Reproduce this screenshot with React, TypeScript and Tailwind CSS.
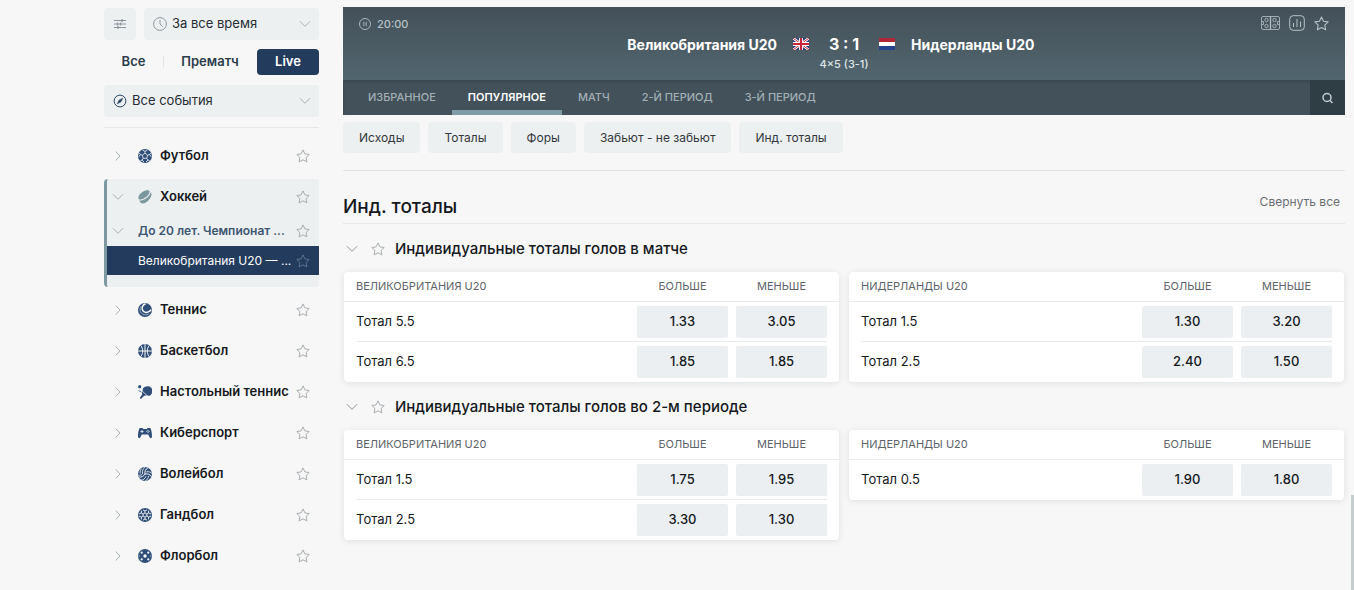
import { useState, type ReactNode } from "react";
import { clsx } from "clsx";

interface OddsRow {
  label: string;
  over: string;
  under: string;
}

interface Market {
  title: string;
  teams: { name: string; rows: OddsRow[] }[];
}

const PERIODS = ["Все", "Прематч", "Live"];
const TABS = ["ИЗБРАННОЕ", "ПОПУЛЯРНОЕ", "МАТЧ", "2-Й ПЕРИОД", "3-Й ПЕРИОД"];
const CHIPS = ["Исходы", "Тоталы", "Форы", "Забьют - не забьют", "Инд. тоталы"];

const MARKETS: Market[] = [
  {
    title: "Индивидуальные тоталы голов в матче",
    teams: [
      {
        name: "ВЕЛИКОБРИТАНИЯ U20",
        rows: [
          { label: "Тотал 5.5", over: "1.33", under: "3.05" },
          { label: "Тотал 6.5", over: "1.85", under: "1.85" },
        ],
      },
      {
        name: "НИДЕРЛАНДЫ U20",
        rows: [
          { label: "Тотал 1.5", over: "1.30", under: "3.20" },
          { label: "Тотал 2.5", over: "2.40", under: "1.50" },
        ],
      },
    ],
  },
  {
    title: "Индивидуальные тоталы голов во 2-м периоде",
    teams: [
      {
        name: "ВЕЛИКОБРИТАНИЯ U20",
        rows: [
          { label: "Тотал 1.5", over: "1.75", under: "1.95" },
          { label: "Тотал 2.5", over: "3.30", under: "1.30" },
        ],
      },
      {
        name: "НИДЕРЛАНДЫ U20",
        rows: [{ label: "Тотал 0.5", over: "1.90", under: "1.80" }],
      },
    ],
  },
];

function Star({ className = "size-[14px] text-[#a9adb0]" }: { className?: string }) {
  return (
    <svg viewBox="0 0 14 14" className={clsx("shrink-0", className)} fill="none" stroke="currentColor" strokeLinejoin="round">
      <path d="M7 .9l1.9 4 4.3.6-3.1 3 .8 4.4L7 10.8l-3.9 2.1.8-4.4-3.1-3 4.3-.6z" />
    </svg>
  );
}

function Chevron({ down, className = "size-[12px] text-[#a9b1b5]" }: { down?: boolean; className?: string }) {
  return (
    <svg viewBox="0 0 12 12" className={clsx("shrink-0", className)} fill="none" stroke="currentColor" strokeLinecap="round">
      <path d={down ? "M1.2 3.5L6 8.300l4.800-4.800" : "M4 1.800L8 6l-4 4.200"} />
    </svg>
  );
}

// Solid disc used as the base of every ball icon
function Ball({ children }: { children: ReactNode }) {
  return (
    <svg viewBox="0 0 14 14" className="size-[14px] shrink-0" fill="none" stroke="#f7f7f7">
      <circle cx="7" cy="7" r="7" fill="#2f4f79" stroke="none" />
      {children}
    </svg>
  );
}

const FootballIcon = () => (
  <Ball>
    <path d="M7 4.2l2.7 2-1 3.1H5.3l-1-3.1zM7 4.2V2.4M9.7 6.2l1.9-.7M8.7 9.3l1.2 1.7M5.3 9.3L4.1 11M4.3 6.2l-1.9-.7" strokeWidth=".8" />
    <path d="M4.6 1.2L7 2.4l2.4-1.2M12.9 3.8l-1.3 1.7 1.6 2.3M11.6 11.6L9.9 11l-1.8 2M2.4 11.6l1.7-.6 1.8 2M1.1 3.8l1.3 1.7L.8 7.8" strokeWidth=".8" />
  </Ball>
);

const HockeyIcon = () => (
  <svg viewBox="0 0 14 14" className="size-[14px] shrink-0" fill="#7c989f">
    <path d="M1 9.600C-1 6.500 3 1.800 7.500.600c2.200-.6 3.700-.1 4.200.8C11.600 5 5.500 9.800 1 9.600z" />
    <path d="M1.400 10.600c5 .2 11-4.800 11.300-8.400 2.200 2-.1 6.600-3.400 9.400-3 2.500-7.200 2.800-7.900-1z" />
  </svg>
);

const TennisIcon = () => (
  <Ball>
    <path d="M7.600.8C4.200 2 3.300 5.400 4.800 7.700c1.600 2.500 5.500 2.500 8.400-1" strokeWidth="1.500" />
    <path d="M3 3.200C1.300 6 2 9.400 4.400 11c2.300 1.400 5 1 6.800-.5" strokeWidth=".5" />
  </Ball>
);

const BasketballIcon = () => (
  <Ball>
    <path d="M7 0v14M0 7h14M2.800 1.500c2.500 3.300 2.500 7.700 0 11M11.200 1.500c-2.500 3.300-2.500 7.700 0 11" />
  </Ball>
);

const TableTennisIcon = () => (
  <svg viewBox="0 0 14 14" className="size-[14px] shrink-0" fill="#2f4f79">
    <circle cx="1.700" cy="1.700" r="1.600" />
    <path d="M5 3.300c2-2.500 6-2.800 8-.8s1.800 6-.8 7.900c-1.200.8-2.500.4-3.400-.4L4.600 6z" />
    <path d="M4.100 6.200l4.500 4.400-2.400.2-2.700 2.800c-.9.700-2-.2-1.400-1.200l2-2.900z" />
    <path d="M.5 5.500l3 1.700" stroke="#2f4f79" strokeWidth=".8" />
  </svg>
);

const GamepadIcon = () => (
  <svg viewBox="0 0 14 14" className="size-[14px] shrink-0" fill="#2f4f79">
    <path d="M2 2h2.500l.8.900h3.400l.8-.9H12c1.200.6 2 4.500 2 8.300 0 2.200-2 2.400-2.600.8L10.300 8.600H3.700L2.600 11.100C2 12.700 0 12.500 0 10.300 0 6.500.8 2.600 2 2z" />
    <path d="M4 4v3M2.500 5.500h3" stroke="#f7f7f7" strokeWidth=".8" />
    <path d="M10 3.900v1M10 6.100v1M8.400 5.500h1M10.600 5.500h1" stroke="#f7f7f7" strokeWidth=".9" />
  </svg>
);

const VolleyballIcon = () => (
  <Ball>
    <path d="M7 7C6.500 4.500 7.500 2 10 .8M7 7c2.500-.5 5 .3 6.500 2.700M7 7c-1.300 2.300-3.700 3.500-6.300 3" strokeWidth="1" />
    <path d="M4.600 6.800C3.900 4 5 1.700 7 .2M2.200 6.500C1.800 4.500 2.500 2.800 3.500 1.600M8.300 4.900c2.500-.6 4.400.2 5.600 1.600M8 9.200c-.7 2.300-2.700 4-5 3.800M10.600 9c-.2 2.200-1.500 4-3.500 5M4.600 6.800C3.800 7.800 2 8.700.3 8.200" strokeWidth=".8" />
  </Ball>
);

const HandballIcon = () => (
  <Ball>
    <path d="M7 4.900l1.900 1.100v2L7 9.100 5.100 8V6zM7 4.900V3M8.900 6l1.700-1M8.900 8l1.700 1M7 9.100V11M5.100 8L3.400 9M5.100 6L3.400 5" strokeWidth=".9" />
    <path d="M7 3L4.900 1.800M7 3l2.100-1.200M10.600 5V2.600M10.600 5l2.400.9M10.600 9l2.400-.9M10.600 9v2.400M7 11l2.100 1.200M7 11l-2.100 1.200M3.400 9v2.400M3.400 9L1 8.100M3.400 5L1 5.900M3.400 5V2.600" strokeWidth=".9" />
  </Ball>
);

const FloorballIcon = () => (
  <Ball>
    <g fill="#f7f7f7" stroke="none">
      <circle cx="7" cy="7" r="1.700" />
      <circle cx="3.700" cy="3.700" r="1.100" />
      <circle cx="10.300" cy="3.700" r="1.100" />
      <circle cx="3.700" cy="10.300" r="1.100" />
      <circle cx="10.300" cy="10.300" r="1.100" />
      <circle cx="12.800" cy="7" r=".6" />
      <circle cx="1.200" cy="7" r=".6" />
    </g>
  </Ball>
);

const SPORTS = [
  { name: "Футбол", icon: FootballIcon },
  { name: "Хоккей", icon: HockeyIcon, open: true },
  { name: "Теннис", icon: TennisIcon },
  { name: "Баскетбол", icon: BasketballIcon },
  { name: "Настольный теннис", icon: TableTennisIcon },
  { name: "Киберспорт", icon: GamepadIcon },
  { name: "Волейбол", icon: VolleyballIcon },
  { name: "Гандбол", icon: HandballIcon },
  { name: "Флорбол", icon: FloorballIcon },
];

function FilterSelect({ label, value, className, children }: { label: string; value: string; className?: string; children: ReactNode }) {
  return (
    <label className={clsx("relative flex h-8 items-center rounded-sm bg-[#edf0f1]", className)}>
      {children}
      <select
        aria-label={label}
        className="absolute inset-0 w-full cursor-pointer appearance-none bg-transparent pr-8 pl-7 text-[13px] text-[#262c33] outline-none"
      >
        <option>{value}</option>
      </select>
      <Chevron down className="mr-2 ml-auto size-[12px] text-[#a9b1b5]" />
    </label>
  );
}

function Sidebar() {
  const [period, setPeriod] = useState("Live");

  return (
    <aside className="w-[215px] shrink-0 pt-2">
      <div className="flex gap-2">
        <button aria-label="Фильтры" className="flex size-8 items-center justify-center rounded-sm bg-[#edf0f1] text-[#8d979d]">
          <svg viewBox="0 0 12 12" className="size-3" fill="none" stroke="currentColor">
            <path d="M0 2.500h12M0 6h12M0 9.500h12" />
            <path d="M8 1v3M3.500 4.500v3M6.500 4.500v3M4 8v3" strokeWidth="1.300" />
          </svg>
        </button>
        <FilterSelect label="Период" value="За все время" className="flex-1">
          <svg viewBox="0 0 14 14" className="ml-[9px] size-[14px] text-[#8d979d]" fill="none" stroke="currentColor">
            <circle cx="7" cy="7" r="6.400" />
            <path d="M7 3v4l2.500 2.500" />
          </svg>
        </FilterSelect>
      </div>

      <div className="mt-[9px] flex h-[26px] items-center justify-between text-[13px] font-semibold text-[#2b3d4b]">
        {PERIODS.map((p, i) => (
          <button
            key={p}
            onClick={() => setPeriod(p)}
            className={clsx(
              "h-[26px] rounded",
              i === 0 && "w-[59px]",
              i === 1 && "flex-1",
              i === 2 && "w-[62px]",
              p === period && "bg-[#233b5d] text-white",
              i === 1 && "bg-[linear-gradient(#e3e6e8,#e3e6e8)] bg-[length:1px_12px] bg-left bg-no-repeat"
            )}
          >
            {p}
          </button>
        ))}
      </div>

      <FilterSelect label="События" value="Все события" className="mt-[10px]">
        <svg viewBox="0 0 14 14" className="ml-[9px] size-[14px] text-[#2b4463]" fill="none" stroke="currentColor">
          <circle cx="7" cy="7" r="5.900" />
          <path d="M10 4L8 8l-4 2 2-4z" fill="currentColor" strokeWidth=".3" />
        </svg>
      </FilterSelect>

      <ul className="mt-[10px] flex flex-col gap-[5px] border-t border-[#e4e6e8] pt-[10px]">
        {SPORTS.map(({ name, icon: Icon, open }) => (
          <li key={name} className={clsx(open ? "rounded-sm border-l-[3px] border-[#7c98a1] bg-[#edf0f1] pb-3" : "pl-[3px]")}>
            <div className="flex h-9 items-center pr-[9px] pl-[5px]">
              <Chevron down={open} />
              <div className="ml-[14px] flex flex-1 items-center gap-2">
                <Icon />
                <a href="#" className="text-[13px] font-semibold whitespace-nowrap text-[#15191d]">{name}</a>
              </div>
              <Star />
            </div>
            {open && (
              <>
                <div className="flex h-[31px] items-center pr-[9px] pl-[5px] text-[#3d5672]">
                  <Chevron down />
                  <a href="#" className="ml-[14px] flex-1 text-[12px] font-semibold whitespace-nowrap">До 20 лет. Чемпионат ...</a>
                  <Star />
                </div>
                <div className="flex h-[29px] items-center bg-[#233b5d] pr-[9px] pl-[31px]">
                  <a href="#" className="flex-1 text-[12px] whitespace-nowrap text-white">Великобритания U20 — ...</a>
                  <Star className="size-[14px] text-[#5d7390]" />
                </div>
              </>
            )}
          </li>
        ))}
      </ul>
    </aside>
  );
}

const FlagGB = () => (
  <svg viewBox="0 0 16 12" className="h-3 w-4">
    <path fill="#26387a" d="M0 0h16v12H0z" />
    <path d="M0 0l16 12M16 0L0 12" stroke="#fff" strokeWidth="2.600" />
    <path d="M0 0l16 12M16 0L0 12" stroke="#c8243c" strokeWidth="1" />
    <path d="M8 0v12M0 6h16" stroke="#fff" strokeWidth="4" />
    <path d="M8 0v12M0 6h16" stroke="#c8243c" strokeWidth="2.200" />
  </svg>
);

const FlagNL = () => (
  <svg viewBox="0 0 16 12" className="h-3 w-4">
    <path fill="#b3253b" d="M0 0h16v4H0z" />
    <path fill="#fff" d="M0 4h16v4H0z" />
    <path fill="#26438d" d="M0 8h16v4H0z" />
  </svg>
);

function MatchHeader() {
  const [tab, setTab] = useState("ПОПУЛЯРНОЕ");

  return (
    <header>
      <div className="grid h-[73px] grid-cols-[100px_1fr_100px] bg-linear-to-b from-[#435059] to-[#52666f] px-4">
        <div className="flex h-[34px] items-center gap-[6px] text-[11px] font-medium text-[#b7c2c7]">
          <svg viewBox="0 0 12 12" className="size-[12px]" fill="none" stroke="currentColor" strokeWidth=".9">
            <circle cx="6" cy="6" r="5.500" />
            <path d="M4.800 3.800v4.400M7.200 3.800v4.400" />
          </svg>
          20:00
        </div>
        <div className="grid grid-cols-[1fr_46px_1fr] content-start gap-x-3 pt-[26px] text-[14px] font-bold whitespace-nowrap text-white">
          <div className="flex h-[22px] items-center justify-end gap-4">
            Великобритания U20
            <FlagGB />
          </div>
          <div className="flex flex-col items-center">
            <span className="text-[16px] leading-[22px]">3 : 1</span>
            <span className="text-[11px] leading-[18px] font-medium text-[#dfe5e8]">4×5 (3-1)</span>
          </div>
          <div className="flex h-[22px] items-center gap-4">
            <FlagNL />
            Нидерланды U20
          </div>
        </div>
        <div className="flex h-8 items-center justify-end gap-[9px] text-[#b7c2c7]">
          <button aria-label="Поле">
            <svg viewBox="0 0 19 14" className="h-[14px] w-[19px]" fill="none" stroke="currentColor" strokeWidth=".8">
              <rect x=".5" y=".5" width="18" height="13" rx="1.500" />
              <path d="M9.500.5v13" strokeWidth="1.300" />
              <circle cx="5.500" cy="4" r="1.700" />
              <circle cx="5.500" cy="10" r="1.700" />
              <circle cx="13.500" cy="4" r="1.700" />
              <circle cx="13.500" cy="10" r="1.700" />
              <path d="M.5 5.500h2v3h-2M18.500 5.500h-2v3h2" />
            </svg>
          </button>
          <button aria-label="Статистика">
            <svg viewBox="0 0 16 16" className="size-4" fill="none" stroke="currentColor">
              <rect x=".7" y=".7" width="14.600" height="14.600" rx="3.500" />
              <path d="M4.500 8v4M8 4v8M11.500 6.500V12" />
            </svg>
          </button>
          <button aria-label="В избранное">
            <Star className="size-[15px]" />
          </button>
        </div>
      </div>

      <nav className="flex h-[35px] bg-[#42515a] pl-[9px] text-[11px] font-medium shadow-[inset_0_2px_2px_#3b4951]">
        {TABS.map((t) => (
          <button
            key={t}
            onClick={() => setTab(t)}
            className={clsx(
              "border-y-[5px] border-t-transparent px-4 whitespace-nowrap",
              t === tab ? "border-b-[#7f9ba7] font-semibold text-white" : "border-b-transparent text-[#a3b0b6]"
            )}
          >
            {t}
          </button>
        ))}
        <button aria-label="Поиск" className="ml-auto flex w-[35px] items-center justify-center bg-[#2f3d44] text-[#c3ced3]">
          <svg viewBox="0 0 12 12" className="size-3" fill="none" stroke="currentColor" strokeWidth="1.500">
            <circle cx="5" cy="5.500" r="4" />
            <path d="M8 8.500l2.500 2.500" />
          </svg>
        </button>
      </nav>
    </header>
  );
}

function OddsTable({ name, rows }: { name: string; rows: OddsRow[] }) {
  return (
    <div className="self-start rounded-sm bg-white shadow-[0_1px_6px_rgba(40,60,70,0.12)]">
      <table className="w-full table-fixed border-separate border-spacing-0 text-[13px] text-[#15191d]">
        <thead>
          <tr className="h-[30px] text-[11px] text-[#5d6369] *:border-b *:border-[#e8ebec] *:font-normal">
            <th className="pl-3 text-left">{name}</th>
            <th className="w-[99px]">БОЛЬШЕ</th>
            <th className="w-[107px] pr-2">МЕНЬШЕ</th>
          </tr>
        </thead>
        <tbody>
          {rows.map((row, i) => {
            const cell = clsx("flex h-10 border-[#e8ebec]", i < rows.length - 1 && "border-b");
            return (
              <tr key={row.label}>
                <td className="pl-3">
                  <div className={clsx(cell, "items-center")}>{row.label}</div>
                </td>
                <td>
                  <div className={clsx(cell, "px-1 pt-1")}>
                    <button className="h-8 flex-1 rounded-xs bg-[#ebeff1] font-medium">{row.over}</button>
                  </div>
                </td>
                <td className="pr-3">
                  <div className={clsx(cell, "pt-1 pl-1")}>
                    <button className="h-8 flex-1 rounded-xs bg-[#ebeff1] font-medium">{row.under}</button>
                  </div>
                </td>
              </tr>
            );
          })}
        </tbody>
      </table>
    </div>
  );
}

export default function App() {
  return (
    <div className="flex min-h-screen gap-6 bg-[#f7f7f7] pr-[9px] pl-[104px] font-['Inter',sans-serif]">
      <Sidebar />
      <main className="min-w-0 flex-1 pt-[7px]">
        <MatchHeader />

        <div className="mt-[7px] flex gap-2 border-b border-[#e1e4e5] pb-[17px]">
          {CHIPS.map((c) => (
            <button key={c} className="h-[31px] rounded-sm bg-[#edf0f1] px-4 text-[12px] whitespace-nowrap text-[#33383e]">
              {c}
            </button>
          ))}
        </div>

        <div className="flex h-[53px] items-end justify-between border-b border-[#e4e6e8] pr-[5px] pb-1">
          <h1 className="text-[19px] leading-[24px] font-medium text-[#15191d]">Инд. тоталы</h1>
          <button className="mb-2 text-[12px] text-[#6a6e73]">Свернуть все</button>
        </div>

        {MARKETS.map((m) => (
          <section key={m.title}>
            <div className="flex h-12 items-center pt-[2px] pl-[3px]">
              <Chevron down className="size-[12px] text-[#8f979c]" />
              <Star className="mr-[10px] ml-[13px] size-[14px] text-[#a9adb0]" />
              <h2 className="text-[15px] leading-5 font-medium text-[#15191d]">{m.title}</h2>
            </div>
            <div className="grid grid-cols-2 gap-[10px] px-px">
              {m.teams.map((t) => (
                <OddsTable key={t.name} name={t.name} rows={t.rows} />
              ))}
            </div>
          </section>
        ))}
      </main>
      <div className="fixed right-0 bottom-0 h-[95px] w-[3px] bg-[#c6cdcf]" />
    </div>
  );
}
